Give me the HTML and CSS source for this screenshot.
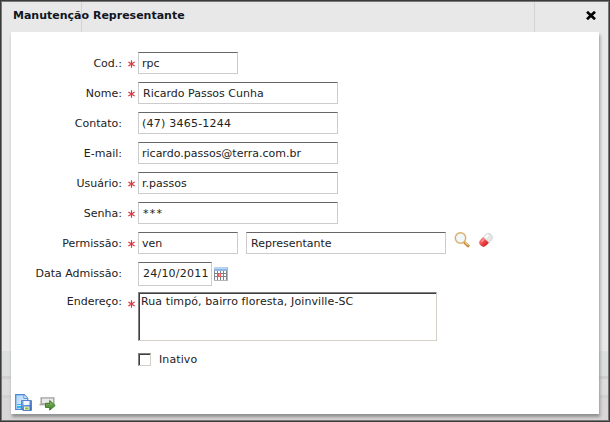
FILE: index.html
```html
<!DOCTYPE html>
<html lang="pt-BR">
<head>
<meta charset="utf-8">
<title>Manutenção Representante</title>
<link rel="stylesheet" href="styles.css">
</head>
<body>
<svg width="0" height="0" class="defs">
  <symbol id="star" viewBox="0 0 7 8"><path d="M3.5 .3v7.4M.4 2.1l6.2 3.8M6.6 2.1L.4 5.9" stroke="#d9363c" stroke-width="1.15"/></symbol>
  <linearGradient id="page" x2="1" y2="1"><stop stop-color="#a9d3fa"/><stop offset="1" stop-color="#f4faff"/></linearGradient>
  <linearGradient id="disk" x2="1" y2="1"><stop stop-color="#8db4ee"/><stop offset="1" stop-color="#2c62bd"/></linearGradient>
  <linearGradient id="arrow" x2="0" y2="1"><stop stop-color="#8dbb62"/><stop offset="1" stop-color="#39812a"/></linearGradient>
  <linearGradient id="red" x2="0" y2="1"><stop stop-color="#f77672"/><stop offset="1" stop-color="#d91f24"/></linearGradient>
</svg>
<div class="dialog">
  <header class="title-bar">
    <h1 class="title">Manutenção Representante</h1>
    <svg class="close" width="10" height="9" viewBox="0 0 10 9"><path d="M1 .8l8 7.4M9 .8L1 8.2" stroke="#000" stroke-width="2.7"/></svg>
  </header>
  <main class="panel">
    <div class="form">
      <div class="row"><span class="label">Cod.:</span><svg class="star"><use href="#star"/></svg><div class="field short">rpc</div></div>
      <div class="row"><span class="label">Nome:</span><svg class="star"><use href="#star"/></svg><div class="field name">Ricardo Passos Cunha</div></div>
      <div class="row"><span class="label">Contato:</span><i class="star"></i><div class="field digits">(47) 3465-1244</div></div>
      <div class="row"><span class="label">E-mail:</span><i class="star"></i><div class="field">ricardo.passos@terra.com.br</div></div>
      <div class="row"><span class="label">Usuário:</span><svg class="star"><use href="#star"/></svg><div class="field">r.passos</div></div>
      <div class="row"><span class="label">Senha:</span><svg class="star"><use href="#star"/></svg><div class="field secret">***</div></div>
      <div class="row"><span class="label">Permissão:</span><svg class="star"><use href="#star"/></svg><div class="field short">ven</div><div class="field role">Representante</div>
        <svg class="search" width="16" height="16" viewBox="0 0 16 16"><path d="M10.500 10.500l3.600 3.300" stroke="#c48b3c" stroke-width="3" stroke-linecap="round"/><path d="M11 10.400l3.200 3" stroke="#f3cf90" stroke-width="1.3"/><circle cx="6.500" cy="6" r="5.200" fill="#f0f7fd" stroke="#ddb06a" stroke-width="1.500"/></svg>
        <svg class="pill" width="16" height="16" viewBox="0 0 16 16"><g transform="rotate(-45 8 8)"><rect x=".4" y="4" width="15.200" height="8" rx="4" fill="#e6e6e6" stroke="#c9c9c9" stroke-width=".6"/><path d="M8 4H4.400a4 4 0 0 0 0 8H8z" fill="url(#red)"/><path d="M3.500 6h4" stroke="#ff9b96" stroke-width="1.3"/><path d="M9 6h4" stroke="#fff" stroke-width="2"/></g></svg>
      </div>
      <div class="row"><span class="label">Data Admissão:</span><i class="star"></i><div class="field date digits">24/10/2011</div>
        <svg class="calendar" width="14" height="14" viewBox="0 0 14 14" shape-rendering="crispEdges"><path fill="#858b90" d="M0 0h14v14H0z"/><path fill="#fff" d="M1 4h11v9H1z"/><path fill="#8fb5e2" d="M0 0h13v4H0z"/><path fill="#b9d3f0" d="M0 0h13v2H0z"/><path stroke="#78838a" d="M1 6.500h11M1 9.500h11M3.500 4v9M6.500 4v9M9.500 4v9"/><path fill="#f7605a" d="M4 9h3v1H4zM6 6h1v4H6zM4 7h1v2H4z"/><path fill="#fbb" d="M5 7h1v2H5z"/><path fill="#b3b5b7" d="M13 0h1v14h-1zM0 13h14v1H0z"/></svg>
      </div>
      <div class="row tall"><span class="label">Endereço:</span><svg class="star"><use href="#star"/></svg><div class="area">Rua timpó, bairro floresta, Joinville-SC</div></div>
      <div class="row check"><span class="box"></span><span class="check-label">Inativo</span></div>
    </div>
    <footer class="tools">
      <svg width="17" height="17" viewBox="0 0 17 17"><path d="M.7.700h8.500l3.500 3.600v11H.7z" fill="url(#page)" stroke="#4986d3" stroke-width="1.200"/><path d="M8.800.7v3.800h3.900" fill="#d8ebff" stroke="#5d98df"/><path d="M2 10h4v1H2zM2 12h4v2H2z" fill="#36b5ee"/><path d="M6.600 6.600h9.800v9.800H8l-1.400-1.400z" fill="url(#disk)" stroke="#3b68b9" stroke-width=".8"/><path d="M8.500 7h6v4h-6z" fill="#f2f7ff"/><path d="M9 12.500h5.500v3.500H9z" fill="#e8f1d4"/><path d="M10 13.500h3.500v2H10z" fill="#8ac43f"/></svg>
      <svg class="send" width="17" height="14" viewBox="0 0 17 14"><path d="M2.200.9h12.600v6H2.200z" fill="#e9eae8" stroke="#a0a09e" stroke-width="1.400"/><path d="M.5 7.600h7" stroke="#aaa" stroke-width="1.600"/><path d="M6.500 6.300h4.200V3.500l5.500 5-5.500 4.700v-2.800H6.500z" fill="url(#arrow)" stroke="#3c7c2c"/></svg>
    </footer>
  </main>
</div>
</body>
</html>
```

FILE: styles.css
```css
* { box-sizing: border-box; }
body {
  margin: 0;
  font: 11px/14px "DejaVu Sans", sans-serif;
  color: #222;
}
.defs { position: absolute; }
.dialog {
  width: 610px;
  height: 422px;
  border: 1px solid #3b3b3b;
  box-shadow: inset 0 0 0 1px #777;
  padding: 1px 10px 7px;
  background:
    linear-gradient(#d2d3d3, #d2d3d3) 80px 0 / 1px 32px no-repeat,
    linear-gradient(#d2d3d3, #d2d3d3) 533px 0 / 1px 32px no-repeat,
    linear-gradient(#e8e8e8 350px, #dcdfde 350px 375px, #cfd1d1 375px 378px, #dcdcdc 378px 394px, #d1d1d1 394px 397px, #d8d6d6 397px);
}
.title-bar {
  height: 30px;
  display: flex;
  justify-content: space-between;
  padding: 7px 3px 0 2px;
}
.title {
  margin: 0;
  font-size: 11px;
  line-height: 14px;
  color: #111522;
}
.close { margin-top: 2px; }
.panel {
  height: 382px;
  background: #fff;
  box-shadow: 1px 3px 3px #777b;
  display: flex;
  flex-direction: column;
  justify-content: space-between;
}
.form { padding-top: 20px; }
.row {
  height: 30px;
  display: flex;
  align-items: flex-start;
}
.label {
  width: 112px;
  padding: 5px 1px 0 0;
  text-align: right;
  white-space: nowrap;
}
.star {
  flex: none;
  width: 7px;
  height: 8px;
  margin: 8px 3px 0 5px;
}
.field {
  width: 200px;
  height: 22px;
  border: 1px solid #ccc;
  border-top-color: #666;
  padding: 4px 0 0 3px;
  line-height: 14px;
  white-space: nowrap;
}
.digits { letter-spacing: .23px; }
.short { width: 100px; }
.name { padding-left: 4px; }
.secret { padding-left: 4px; letter-spacing: 1.2px; }
.role { margin-left: 8px; padding-left: 4px; }
.date { width: 74px; height: 24px; padding-left: 4px; }
.search { margin: 0 0 0 8px; }
.pill { margin-left: 8px; }
.calendar { margin: 5px 0 0 2px; }
.tall { height: 60px; }
.tall .label { padding-top: 3px; }
.area {
  width: 299px;
  height: 49px;
  border: 1px solid #d4d0c8;
  border-top-color: #808080;
  border-left-color: #808080;
  box-shadow: inset 1px 1px #404040;
  padding: 2px;
  letter-spacing: .1px;
}
.check { padding-left: 127px; }
.box {
  width: 13px;
  height: 13px;
  margin-top: 1px;
  border: 1px solid #d4d0c8;
  border-top-color: #808080;
  border-left-color: #808080;
  box-shadow: inset 1px 1px #404040;
}
.check-label { margin: 1px 0 0 8px; letter-spacing: .1px; }
.tools {
  display: flex;
  gap: 7px;
  padding: 0 0 3px 4px;
}
.send { margin-top: 3px; }
```
